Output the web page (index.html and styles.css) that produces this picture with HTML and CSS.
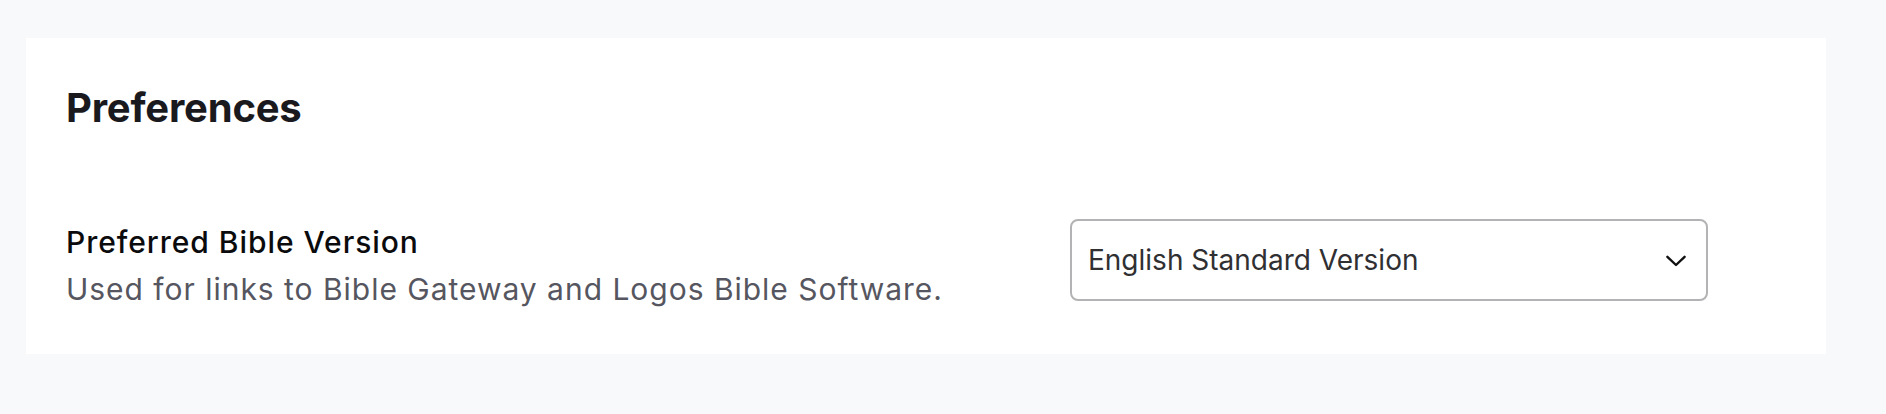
FILE: index.html
```html
<!DOCTYPE html>
<html lang="en">
<head>
<meta charset="utf-8">
<title>Preferences</title>
<link rel="stylesheet" href="styles.css">
</head>
<body>
<main class="page">
  <section class="card">
    <h1 class="card-title">Preferences</h1>
    <div class="pref-row">
      <div class="pref-text">
        <div class="pref-label">Preferred Bible Version</div>
        <div class="pref-desc">Used for links to Bible Gateway and Logos Bible Software.</div>
      </div>
      <div class="select" role="combobox" aria-expanded="false">
        <span class="select-value">English Standard Version</span>
        <svg class="select-chevron" width="20" height="12" viewBox="0 0 20 12" aria-hidden="true">
          <polyline points="1.4,1.8 10,10 18.6,1.8" fill="none" stroke="#111" stroke-width="2.4" stroke-linecap="round" stroke-linejoin="round"/>
        </svg>
      </div>
    </div>
  </section>
</main>
</body>
</html>
```

FILE: styles.css
```css
html, body {
  margin: 0;
  padding: 0;
  background: #f8f9fb;
  font-family: "Inter", "Noto Sans", sans-serif;
}

.page {
  padding: 38px 0 0 26px;
}

.card {
  width: 1800px;
  box-sizing: border-box;
  background: #ffffff;
  padding: 46px 40px 45px 40px;
}

.card-title {
  margin: 0;
  font-size: 40px;
  line-height: 48px;
  font-weight: 700;
  letter-spacing: -0.2px;
  color: #1a1a1e;
}

.pref-row {
  display: flex;
  align-items: flex-start;
  margin-top: 87px;
}

.pref-text {
  width: 1004px;
  padding-top: 3px;
}

.pref-label {
  font-size: 30px;
  line-height: 40px;
  font-weight: 500;
  letter-spacing: 0.95px;
  color: #0b0b0d;
}

.pref-desc {
  margin-top: 7px;
  font-size: 30px;
  line-height: 40px;
  font-weight: 400;
  letter-spacing: 0.98px;
  color: #565660;
}

.select {
  width: 638px;
  height: 82px;
  box-sizing: border-box;
  border: 2px solid #b3b3b5;
  border-radius: 8px;
  display: flex;
  align-items: center;
  justify-content: space-between;
  padding: 0 20px 0 16px;
  background: #fff;
}

.select-value {
  font-size: 28px;
  color: #303033;
}

.select-chevron {
  display: block;
  margin-top: 2px;
}
```
